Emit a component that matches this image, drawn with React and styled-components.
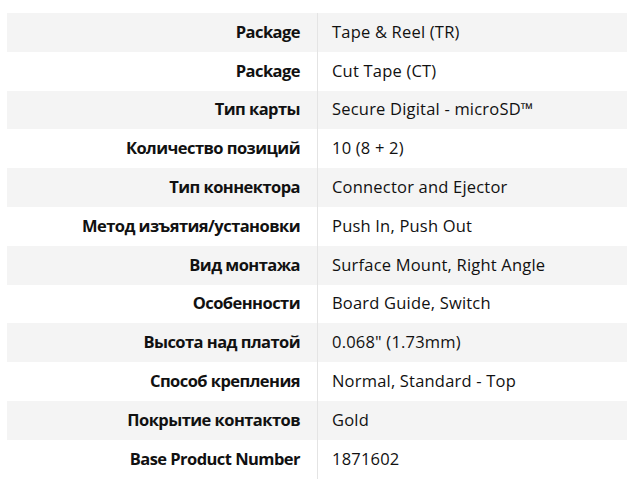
import React from "react";
import styled, { createGlobalStyle } from "styled-components";

const Global = createGlobalStyle`
  body {
    margin: 0;
    background: #fff;
    font-family: "Open Sans", "Noto Sans", sans-serif;
  }
`;

const Table = styled.div`
  margin: 13px 3px 0 7px;
  display: flex;
  flex-direction: column;
`;

const Row = styled.div`
  display: grid;
  grid-template-columns: 311px 1fr;
  height: 38.8px;
  background: ${(p) => (p.shaded ? "#f4f4f4" : "#fff")};
`;

const Label = styled.div`
  display: flex;
  align-items: center;
  justify-content: flex-end;
  padding: 0 17px 2px 0;
  border-right: 1px solid #e4e4e4;
  font-size: 16.5px;
  font-weight: 700;
  letter-spacing: -0.55px;
  color: #111;
`;

const Value = styled.div`
  display: flex;
  align-items: center;
  padding: 0 0 2px 14px;
  font-size: 16.5px;
  letter-spacing: 0.2px;
  color: #111;
`;

const rows = [
  ["Package", "Tape & Reel (TR)"],
  ["Package", "Cut Tape (CT)"],
  ["Тип карты", "Secure Digital - microSD™"],
  ["Количество позиций", "10 (8 + 2)"],
  ["Тип коннектора", "Connector and Ejector"],
  ["Метод изъятия/установки", "Push In, Push Out"],
  ["Вид монтажа", "Surface Mount, Right Angle"],
  ["Особенности", "Board Guide, Switch"],
  ["Высота над платой", "0.068\" (1.73mm)"],
  ["Способ крепления", "Normal, Standard - Top"],
  ["Покрытие контактов", "Gold"],
  ["Base Product Number", "1871602"],
];

export default function App() {
  return (
    <>
      <Global />
      <Table>
        {rows.map(([k, v], i) => (
          <Row key={i} shaded={i % 2 === 0}>
            <Label>{k}</Label>
            <Value>{v}</Value>
          </Row>
        ))}
      </Table>
    </>
  );
}
